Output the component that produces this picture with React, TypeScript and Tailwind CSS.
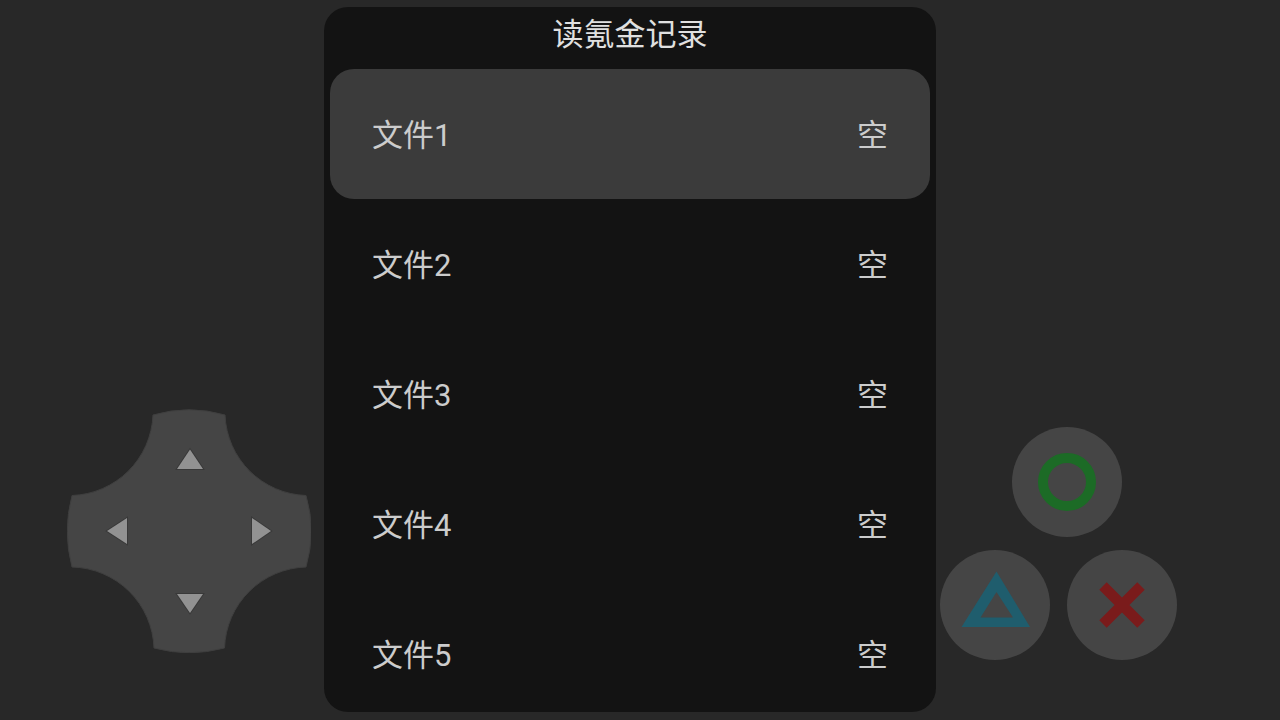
import { useState } from "react";
import clsx from "clsx";

interface SaveFile {
  id: number;
  name: string;
  status: string;
}

const files: SaveFile[] = [
  { id: 1, name: "文件1", status: "空" },
  { id: 2, name: "文件2", status: "空" },
  { id: 3, name: "文件3", status: "空" },
  { id: 4, name: "文件4", status: "空" },
  { id: 5, name: "文件5", status: "空" },
];

interface ArrowButtonProps {
  label: string;
  className: string;
  points: string;
  onClick?: () => void;
}

function ArrowButton({ label, className, points, onClick }: ArrowButtonProps) {
  return (
    <button
      type="button"
      aria-label={label}
      onClick={onClick}
      className={clsx("flex items-center justify-center", className)}
    >
      <svg className="h-8 w-8" viewBox="0 0 32 32">
        <polygon
          points={points}
          fill="#929292"
          stroke="#393939"
          strokeWidth={2}
          paintOrder="stroke"
        />
      </svg>
    </button>
  );
}

function DPad({ onMove }: { onMove: (step: number) => void }) {
  return (
    <div className="relative h-[244px] w-[244px] shrink-0">
      <svg className="absolute inset-0 h-full w-full" viewBox="0 0 244 244">
        <path
          d="M86 6 Q122 -4.500 158 6 A84 84 0 0 0 239 86.500 Q249.500 122 239 158 A84 84 0 0 0 157.500 239 Q122 248.500 87 239 A84 84 0 0 0 5 158 Q-4.500 122 5 86.500 A84 84 0 0 0 86 6 Z"
          fill="#454545"
          stroke="#3f3f3f"
        />
      </svg>
      <div className="relative grid h-full grid-cols-3 grid-rows-3 p-3.5">
        <ArrowButton
          label="上"
          className="col-start-2 row-start-1"
          points="17,6.500 4,26 30,26"
          onClick={() => onMove(-1)}
        />
        <ArrowButton
          label="左"
          className="col-start-1 row-start-2"
          points="6,16 26,3 26,29"
        />
        <ArrowButton
          label="右"
          className="col-start-3 row-start-2"
          points="26,16 7,3 7,29"
        />
        <ArrowButton
          label="下"
          className="col-start-2 row-start-3"
          points="17,26 4,7 30,7"
          onClick={() => onMove(1)}
        />
      </div>
    </div>
  );
}

interface ActionButtonProps {
  label: string;
  className?: string;
  children: React.ReactNode;
}

function ActionButton({ label, className, children }: ActionButtonProps) {
  return (
    <button
      type="button"
      aria-label={label}
      className={clsx(
        "h-[110px] w-[110px] shrink-0 rounded-full bg-[#454545]",
        className,
      )}
    >
      <svg className="h-full w-full" viewBox="0 0 110 110" fill="none">
        {children}
      </svg>
    </button>
  );
}

export default function App() {
  const [selected, setSelected] = useState(1);

  const move = (step: number) => {
    setSelected((id) => Math.min(files.length, Math.max(1, id + step)));
  };

  return (
    <div className="grid h-screen grid-cols-[1fr_612px_1fr] grid-rows-[minmax(0,1fr)] overflow-hidden bg-[#282828] pr-5 font-[Roboto,'Noto_Sans_CJK_SC',sans-serif] text-[31px] leading-10 text-[#cccccc]">
      <aside className="flex items-end justify-end pr-[13px] pb-[67px]">
        <DPad onMove={move} />
      </aside>

      <main className="mt-[7px] mb-2 flex flex-col overflow-hidden rounded-3xl bg-[#131313] px-1.5">
        <h1 className="pt-2 pb-3.5 text-center text-[#e0e0e0]">读氪金记录</h1>
        <ul className="min-h-0 flex-1">
          {files.map((file) => (
            <li key={file.id}>
              <button
                type="button"
                aria-pressed={file.id === selected}
                onClick={() => setSelected(file.id)}
                className={clsx(
                  "flex h-[130px] w-full items-center justify-between rounded-3xl px-[42px] pt-1",
                  file.id === selected && "bg-[#3b3b3b]",
                )}
              >
                <span>{file.name}</span>
                <span>{file.status}</span>
              </button>
            </li>
          ))}
        </ul>
      </main>

      <aside className="flex flex-col items-start justify-end gap-[13px] pb-[60px] pl-1">
        <ActionButton label="圆圈" className="ml-[72px]">
          <circle cx="55" cy="55" r="24" stroke="#1c6b26" strokeWidth={10} />
        </ActionButton>
        <div className="flex gap-[17px]">
          <ActionButton label="三角">
            <path
              d="M56.500 21.500 L90 77 H21.500 Z M56.500 42 L40.500 67.500 H73 Z"
              fill="#1f5d6d"
              fillRule="evenodd"
            />
          </ActionButton>
          <ActionButton label="叉">
            <path
              d="M36 36 L74 74 M74 36 L36 74"
              stroke="#7a1b1b"
              strokeWidth={10.5}
            />
          </ActionButton>
        </div>
      </aside>
    </div>
  );
}
